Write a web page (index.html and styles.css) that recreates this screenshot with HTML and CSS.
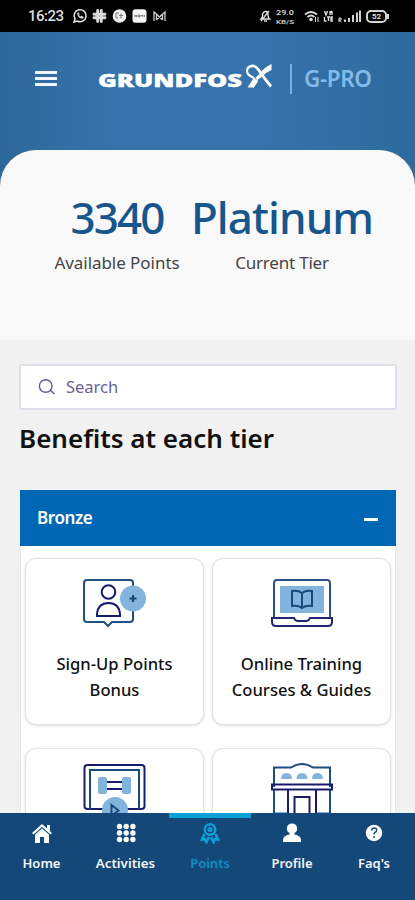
FILE: index.html
```html
<!DOCTYPE html>
<html lang="en">
<head>
<meta charset="utf-8">
<title>Grundfos G-PRO</title>
<link rel="stylesheet" href="styles.css">
</head>
<body>
<div class="phone">
  <div class="status">
    <span class="clock">16:23</span>
    <svg class="status-apps" width="96" height="16" viewBox="0 0 96 16">
      <g fill="none" stroke="#ddd" stroke-width="1.6">
        <path d="M2 14l1-3.2A6 6 0 1 1 5.300 13z"/>
        <path d="M5.500 5q0 5 5 5.500l1-1.500-2-1-1 .8q-1.500-.8-2-2l.8-.8-.8-1.600z" fill="#ddd" stroke-width=".5"/>
        <path d="M25.700 2.500v11M29.300 2.500v11M22 6.200h11M22 9.800h11" stroke-width="2.900" stroke-linecap="round"/>
      </g>
      <circle cx="47.500" cy="8" r="6.800" fill="#eee"/>
      <path d="M47 5h-3v5h2M47 7.500h4M49 5.500v5" stroke="#777" fill="none"/>
      <rect x="60.500" y="1.300" width="14" height="13.500" rx="3" fill="#f4f4f4"/>
      <path d="M63 9V7l1.500 2V7M66 9V7h1.500v2zM69 9V7l1 1 1-1v2M72.500 7v2" stroke="#777" fill="none" stroke-width=".9"/>
      <path d="M82 13V4l5.500 5L93 4v9M84.500 12V7M90.500 12V7M84.500 12l6-6M90.500 12l-6-6" stroke="#ccc" fill="none" stroke-width="1.300"/>
    </svg>
    <span class="spacer"></span>
    <svg class="bell" width="12" height="14" viewBox="0 0 12 14">
      <path d="M2 10q2-2 1.500-5Q5 2 7 2.500T9 6q0 3 1.500 4zM5 12h3M2 12L10 2" fill="none" stroke="#ddd" stroke-width="1.400"/>
    </svg>
    <svg class="rate" width="19" height="18" viewBox="0 0 19 18">
      <text class="rate-value" x="0" y="8" textLength="18" lengthAdjust="spacingAndGlyphs">29.0</text>
      <text class="rate-unit" x="0" y="16.500" textLength="18" lengthAdjust="spacingAndGlyphs">KB/S</text>
    </svg>
    <svg class="signals" width="58" height="14" viewBox="0 0 58 14">
      <g fill="none" stroke="#ddd" stroke-width="1.800">
        <path d="M1 5.500q6-5 12 0M3.500 8q3.500-3 7 0"/>
        <path d="M11.500 8v5M14 8v5" stroke-width="1"/>
        <path d="M20.500 2l1.500 4 1.500-4M26 2v4M26 4l2-2M28 2v4M20.500 8v4h2M23 8h3M24.500 8v4M29 8h-2v4h2M27 10h2" stroke-width="1.400"/>
        <path d="M35 13V9h2v2h-2l2.500 2" stroke-width="1"/>
        <path d="M41 13v-2.500M45 13V9M49 13V6M53 13V3.500M56 13V1.500" stroke-width="1.900"/>
      </g>
      <circle cx="7" cy="10.500" r="1.800" fill="#ddd"/>
    </svg>
    <span class="battery">52</span>
  </div>

  <header class="header">
    <span class="menu"><i></i><i></i><i></i></span>
    <svg class="logo" width="176" height="30" viewBox="0 0 176 30">
      <text class="wordmark" x="0" y="23.500" textLength="144" lengthAdjust="spacingAndGlyphs">GRUNDFOS</text>
      <g fill="none" stroke="#fff">
        <path d="M150.500 4.500Q156 0 161 7.500T173 23.500" stroke-width="2.800"/>
        <path d="M151 3.500q-3.500 4-1 7.500 2 2.500 6 4" stroke-width="2.200"/>
        <path d="M154 24l4.500-6.500" stroke-width="3.600"/>
      </g>
      <path d="M173.500 1v6q-6 2.500-10 7l-4 3-2-2.500 4-3.500q5-7 12-10zM149.500 24.500l6.500-10 4 3-6 7z" fill="#fff"/>
    </svg>
    <span class="divider"></span>
    <span class="product">G-PRO</span>
  </header>

  <section class="summary">
    <div class="stat points"><strong>3340</strong><span>Available Points</span></div>
    <div class="stat tier"><strong>Platinum</strong><span>Current Tier</span></div>
  </section>

  <main class="content">
    <div class="search">
      <svg width="18" height="18" viewBox="0 0 18 18"><path d="M14 8A6.300 6.300 0 1 1 1.400 8 6.300 6.300 0 0 1 14 8zM12.500 12.500l4 3.500" fill="none" stroke="#625b94" stroke-width="1.400"/></svg>
      <span>Search</span>
    </div>
    <h1>Benefits at each tier</h1>
    <section class="panel">
      <div class="panel-head"><span>Bronze</span><i></i></div>
      <div class="cards">
        <article class="card">
          <svg width="64" height="52" viewBox="0 0 64 52">
            <path d="M4 2h43q3 0 3 3v36q0 3-3 3H29l-4 4-4-4H4q-3 0-3-3V5q0-3 3-3z" fill="#fff" stroke="#1d4f83" stroke-width="2"/>
            <circle cx="25.500" cy="14" r="6.800" fill="none" stroke="#191c6b" stroke-width="2"/>
            <path d="M14 38v-2q1-11 11.500-11T37 36v2z" fill="none" stroke="#191c6b" stroke-width="2"/>
            <circle cx="50" cy="20.500" r="13" fill="#83b4dd"/>
            <path d="M50 17v7M46.500 20.500h7" stroke="#17466f" stroke-width="2.200"/>
          </svg>
          <p>Sign-Up Points<br>Bonus</p>
        </article>
        <article class="card">
          <svg width="64" height="52" viewBox="0 0 64 52">
            <path d="M4 39V5q0-3 3-3h50q3 0 3 3v34" fill="#fff" stroke="#284e8b" stroke-width="2"/>
            <path d="M10 8h44v27H10z" fill="#83b4dd"/>
            <path d="M32 15q-4-3-10-2v15q6-1 10 2 4-3 10-2V13q-6-1-10 2zv15" fill="none" stroke="#164a7c" stroke-width="2"/>
            <path d="M2 40h22q1 3 4 3h8q3 0 4-3h22v4q0 4-4 4H6q-4 0-4-4z" fill="#fff" stroke="#20296f" stroke-width="2"/>
          </svg>
          <p>Online Training<br>Courses &amp; Guides</p>
        </article>
        <article class="card">
          <svg width="64" height="52" viewBox="0 0 64 52">
            <rect x="1.500" y="2" width="60" height="44" rx="3" fill="#fff" stroke="#191c6b" stroke-width="2"/>
            <path d="M7 46V7h49v39" fill="none" stroke="#174a7c" stroke-width="2"/>
            <path d="M23 19h18M23 26h18" stroke="#191c6b" stroke-width="2"/>
            <rect x="15" y="14" width="9" height="17" rx="2" fill="#83b4dd"/><rect x="39" y="14" width="9" height="17" rx="2" fill="#83b4dd"/>
            <circle cx="32" cy="47" r="13" fill="#83b4dd"/>
            <path d="M28.500 42v11l7-5.500z" fill="none" stroke="#174a7c" stroke-width="2"/>
          </svg>
        </article>
        <article class="card">
          <svg width="64" height="56" viewBox="0 0 64 56">
            <path d="M4 24V4.500h17q11-7 22 0h17V24M4 26v28M60 26v28" fill="none" stroke="#1e4d83" stroke-width="2"/>
            <path d="M11 16q0-6 5.500-6t5.500 6zM26.500 16q0-6 5.500-6t5.500 6zM42 16q0-6 5.500-6t5.500 6zM5 49h12v3H5zM47 49h12v3H47z" fill="#83b4dd"/>
            <path d="M2 21.500h60v5H2zM18 27v27M46 27v27M24.500 54V34h15v20" fill="none" stroke="#191c6b" stroke-width="2"/>
          </svg>
        </article>
      </div>
    </section>
  </main>

  <nav class="tabs">
    <a class="tab home"><svg width="22" height="22" viewBox="0 0 22 22"><path d="M1 11L11 2l10 9-1.500 1.500L11 5l-8.500 7.500zM4 12.500L11 6.500l7 6V21h-5v-6H9v6H4zM16 3h3v6l-3-2.500z" fill="#fff"/></svg><span>Home</span></a>
    <a class="tab activities"><svg width="22" height="22" viewBox="0 0 22 22"><g fill="#fff"><circle cx="4.500" cy="4.500" r="2.700"/><circle cx="11.200" cy="4.500" r="2.700"/><circle cx="17.900" cy="4.500" r="2.700"/><circle cx="4.500" cy="11" r="2.700"/><circle cx="11.200" cy="11" r="2.700"/><circle cx="17.900" cy="11" r="2.700"/><circle cx="4.500" cy="17.500" r="2.700"/><circle cx="11.200" cy="17.500" r="2.700"/><circle cx="17.900" cy="17.500" r="2.700"/></g></svg><span>Activities</span></a>
    <a class="tab rewards"><svg width="22" height="22" viewBox="0 0 22 22"><g fill="none" stroke="#0ba0d8"><circle cx="11" cy="7.500" r="5.300" stroke-width="2.400"/><circle cx="11" cy="7.500" r="1.500" stroke-width="2"/><path d="M5.500 12L3 17.500l3-.3 1.500 2.800 2.500-5M16.500 12l2.500 5.500-3-.3-1.500 2.800-2.500-5" stroke-width="2.600"/></g></svg><span>Points</span></a>
    <a class="tab profile"><svg width="22" height="22" viewBox="0 0 22 22"><path d="M11 1.500a5 5 0 0 1 2.500 9.400v1.600q6.500 1 6.500 5.500v2H2v-2q0-4.500 6.500-5.500v-1.600A5 5 0 0 1 11 1.500z" fill="#fff"/></svg><span>Profile</span></a>
    <a class="tab faqs"><svg width="22" height="22" viewBox="0 0 22 22"><circle cx="11" cy="11" r="8.200" fill="#fff"/><path d="M8.500 8.500q.5-2.500 2.700-2.500 2.500 0 2.500 2.200 0 1.500-2 2.300-.7.500-.7 2M11 14v2" fill="none" stroke="#174a7c" stroke-width="1.500"/></svg><span>Faq's</span></a>
  </nav>
</div>
</body>
</html>
```

FILE: styles.css
```css
* { box-sizing: border-box; }
body { margin: 0; font-family: "Noto Sans", "Open Sans", sans-serif; }
.phone { width: 415px; height: 900px; overflow: hidden; display: flex; flex-direction: column; background: #f1f1f1; }
svg { display: block; flex: none; }

.status { height: 32px; flex: none; background: #000; color: #ddd; display: flex; align-items: center; padding: 0 26px 0 28px; }
.clock { width: 44px; font: 500 15px/32px Roboto, sans-serif; letter-spacing: -.5px; }
.spacer { flex: 1; }
.bell { margin-right: 5px; }
.rate { margin-right: 9px; fill: #ddd; font-family: Roboto, sans-serif; font-weight: 500; }
.rate-value { font-size: 8px; }
.rate-unit { font-size: 6px; }
.signals { margin-right: 4px; }
.battery { position: relative; width: 21px; height: 13px; border: 2px solid #d5d5d5; border-radius: 5px; font: 700 8px/9px Roboto, sans-serif; text-align: center; margin-right: 2px; }
.battery::after { content: ""; position: absolute; right: -4px; top: 2px; width: 2px; height: 5px; background: #d5d5d5; }

.header { height: 158px; margin-bottom: -40px; flex: none; display: flex; align-items: flex-start; padding: 31px 0 0 34px; background: linear-gradient(90deg, #2e689b 0%, #3672ab 28%, #3672ab 62%, #2d6b9e 100%); }
.menu { width: 22px; margin: 8px 41px 0 1px; display: flex; flex-direction: column; gap: 3px; }
.menu i { height: 3px; background: #eef6ff; }
.logo { width: 176px; }
.wordmark { font: 800 18px "Open Sans", sans-serif; fill: #fff; stroke: #fff; stroke-width: .4px; }
.divider { width: 2px; height: 30px; margin: 1px 12px 0 16px; background: #76b0e4; }
.product { font-size: 22.5px; line-height: 32px; font-weight: 600; letter-spacing: -.4px; color: #82bbea; }

.summary { height: 190px; flex: none; background: #f9f9f9; border-radius: 36px 36px 0 0; padding: 41px 43px 0 54px; display: flex; justify-content: space-between; }
.stat { display: flex; flex-direction: column; align-items: center; white-space: nowrap; }
.stat strong { font-size: 44px; line-height: 52px; font-weight: 500; color: #17568d; }
.stat span { font-size: 17px; line-height: 24px; margin-top: 8px; color: #444; letter-spacing: -.05px; }
.points { width: 126px; }
.points strong { letter-spacing: -1.9px; }
.tier { width: 180px; }
.tier strong { letter-spacing: -.9px; }
.tier span { letter-spacing: -.2px; }

.content { flex: 1; min-height: 0; overflow: hidden; padding: 24px 18px 0 19px; }
.search { height: 46px; background: #fff; border: 2px solid #dedeea; border-radius: 3px; display: flex; align-items: center; gap: 10px; padding: 0 0 1px 17px; color: #6a6399; font-size: 16.5px; }
h1 { margin: 9px 0 0; font-size: 26px; line-height: 38px; font-weight: 600; color: #111; white-space: nowrap; }
.panel { margin: 33px 0 0 1px; width: 376px; background: #fff; border: solid #e6e6e6; border-width: 0 1px; }
.panel-head { height: 56px; margin: 0 -1px; background: #0067b4; color: #fff; display: flex; align-items: center; justify-content: space-between; padding: 0 18px 2px 17px; font-size: 17px; font-weight: 600; letter-spacing: -.4px; }
.panel-head i { width: 14px; height: 3px; background: #fff; margin-top: 4px; }
.cards { display: grid; grid-template-columns: 179px 179px; grid-auto-rows: 167px; gap: 23px 8px; padding: 12px 4px; }
.card { border: 1px solid #e2e2e2; border-radius: 11px; box-shadow: 0 1px 3px #0002; display: flex; flex-direction: column; align-items: center; padding-top: 19px; background: #fff; }
.card:nth-child(n+3) { padding-top: 14px; }
.card p { margin: 21px 0 0; font-size: 16.6px; line-height: 26px; font-weight: 500; color: #111; text-align: center; white-space: nowrap; }

.tabs { height: 87px; flex: none; background: #134878; display: grid; grid-template-columns: 83px 86px 82px 82px 82px; }
.tab { display: flex; flex-direction: column; align-items: center; padding-top: 9px; color: #f5f5f5; font-size: 13px; font-weight: 600; line-height: 20px; white-space: nowrap; }
.tab span { margin-top: 9px; }
.activities { padding-right: 1px; font-size: 13.3px; }
.rewards { border-top: 5px solid #0ba0d8; padding-top: 4px; color: #0b91c6; }
```
